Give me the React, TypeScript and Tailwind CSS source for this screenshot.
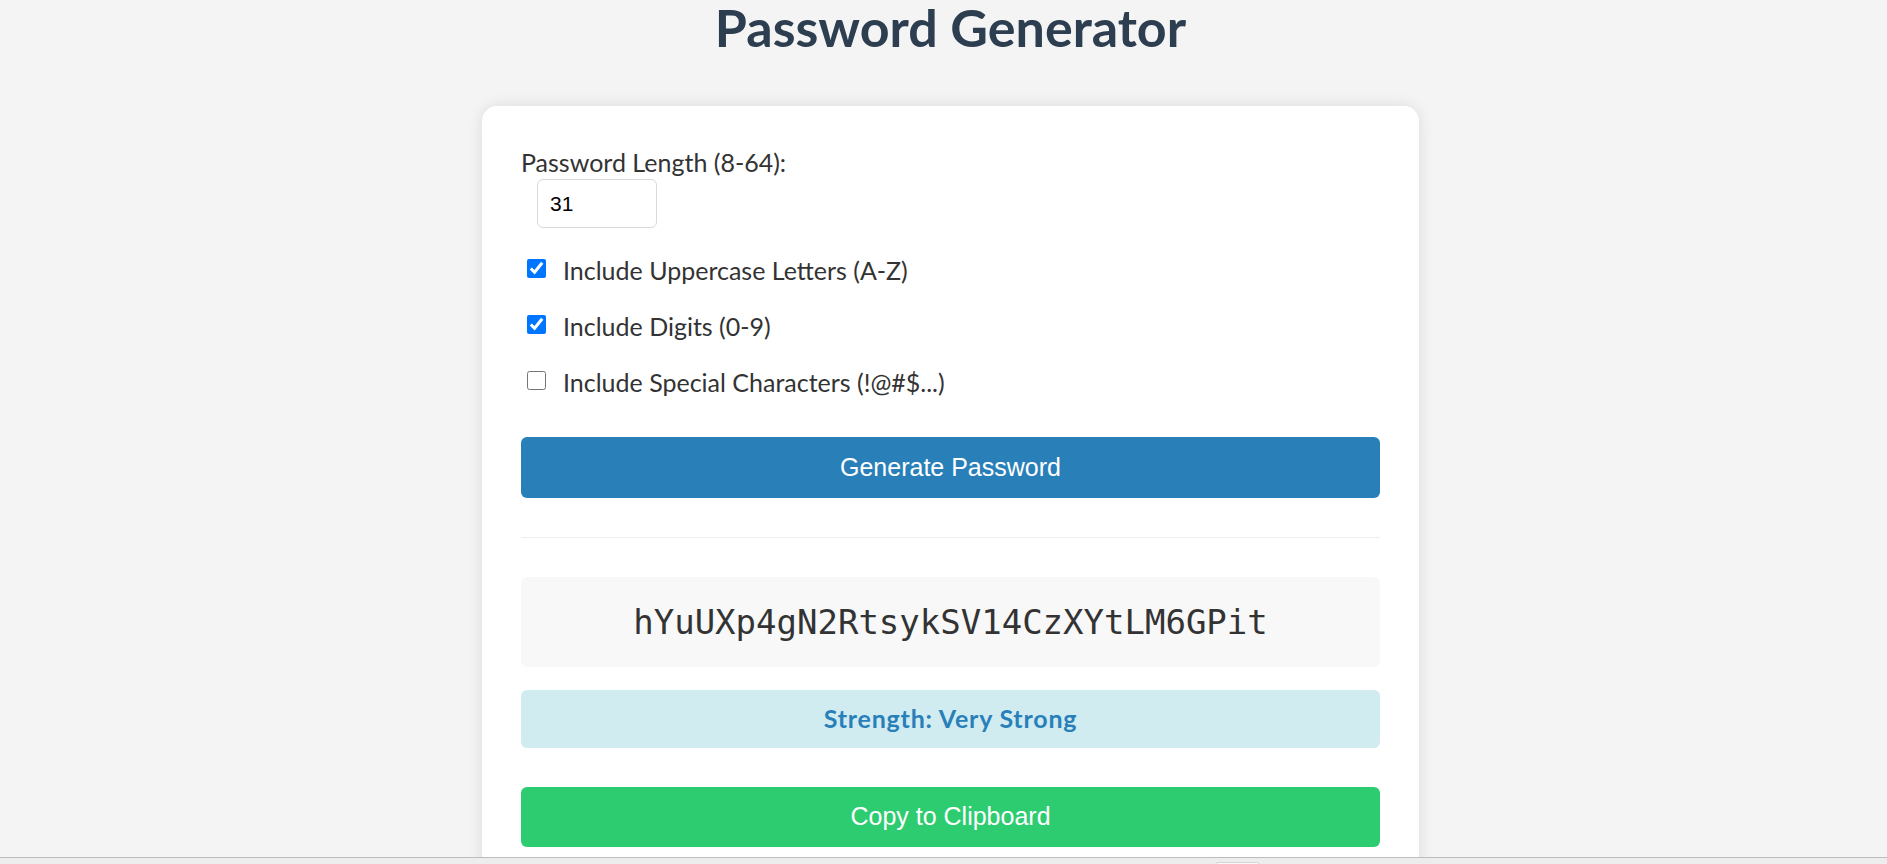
import React from "react";

export default function App() {
  return (
    <div className="h-[864px] w-[1887px] overflow-hidden bg-[#f4f4f4] flex flex-col" style={{ fontFamily: 'Lato, "Noto Sans", sans-serif' }}>
      <div className="flex-1 min-h-0 overflow-hidden pl-[14px] flex flex-col items-center">
        <h1 className="m-0 shrink-0 h-[106px] text-[52px] leading-[54px] font-bold text-[#2c3e50]">Password Generator</h1>
        <div className="w-[937px] shrink-0 bg-white rounded-[15px] shadow-[0_0_15px_rgba(0,0,0,0.1)] px-[39px] pt-[39px] pb-[40px] text-[#333]">
          <div className="text-[25px] leading-[34px] h-[34px]">Password Length (8-64):</div>
          <input
            type="text"
            defaultValue="31"
            className="block ml-[16px] w-[120px] h-[49px] border border-[#d9d9d9] rounded-[6px] px-[12px] text-[21px] text-black outline-none"
            style={{ fontFamily: '"Liberation Sans", Arial, sans-serif' }}
          />
          <div className="mt-[25px] flex flex-col gap-[22px]">
            {[
              { t: "Include Uppercase Letters (A-Z)", c: true },
              { t: "Include Digits (0-9)", c: true },
              { t: "Include Special Characters (!@#$...)", c: false },
            ].map((r) => (
              <label key={r.t} className="flex items-start h-[34px] text-[25px] leading-[34px]">
                <input type="checkbox" defaultChecked={r.c} className="m-0 ml-[6px] mt-[6px] w-[19px] h-[19px] accent-[#0075ff]" />
                <span className="ml-[17px]">{r.t}</span>
              </label>
            ))}
          </div>
          <button
            className="mt-[38px] w-full h-[61px] rounded-[6px] bg-[#2980b9] text-white text-[25px] flex items-center justify-center"
            style={{ fontFamily: '"Liberation Sans", Arial, sans-serif' }}
          >
            Generate Password
          </button>
          <div className="mt-[39px] h-[1px] bg-[#eeeeee]" />
          <div className="mt-[39px] h-[90px] rounded-[6px] bg-[#f8f8f8] flex items-center justify-center text-[34px] text-[#333]" style={{ fontFamily: '"DejaVu Sans Mono", monospace' }}>
            hYuUXp4gN2RtsykSV14CzXYtLM6GPit
          </div>
          <div className="mt-[23px] h-[58px] rounded-[6px] bg-[#d1ecf1] flex items-center justify-center text-[25px] font-bold tracking-[0.8px] text-[#2980b9]">
            Strength: Very Strong
          </div>
          <button
            className="mt-[39px] w-full h-[60px] rounded-[6px] bg-[#2ecc71] text-white text-[25px] flex items-center justify-center"
            style={{ fontFamily: '"Liberation Sans", Arial, sans-serif' }}
          >
            Copy to Clipboard
          </button>
        </div>
      </div>
      <div className="h-[7px] shrink-0 border-t border-[#bdbdbd] bg-[#ededed] relative">
        <div className="absolute left-[1215px] top-[4px] w-[45px] h-[6px] rounded-[3px] bg-[#f8f8f8] border border-[#d6d6d6]" />
      </div>
    </div>
  );
}
